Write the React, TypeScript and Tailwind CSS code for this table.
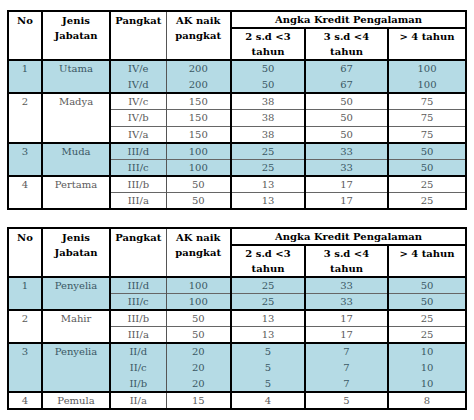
import React from "react";

type Row = { p: string; ak: string; a: string; b: string; c: string };
type Group = { no: string; jenis: string; blue: boolean; inner: boolean; rows: Row[] };

const t1: Group[] = [
  { no: "1", jenis: "Utama", blue: true, inner: false, rows: [
    { p: "IV/e", ak: "200", a: "50", b: "67", c: "100" },
    { p: "IV/d", ak: "200", a: "50", b: "67", c: "100" },
  ]},
  { no: "2", jenis: "Madya", blue: false, inner: true, rows: [
    { p: "IV/c", ak: "150", a: "38", b: "50", c: "75" },
    { p: "IV/b", ak: "150", a: "38", b: "50", c: "75" },
    { p: "IV/a", ak: "150", a: "38", b: "50", c: "75" },
  ]},
  { no: "3", jenis: "Muda", blue: true, inner: true, rows: [
    { p: "III/d", ak: "100", a: "25", b: "33", c: "50" },
    { p: "III/c", ak: "100", a: "25", b: "33", c: "50" },
  ]},
  { no: "4", jenis: "Pertama", blue: false, inner: true, rows: [
    { p: "III/b", ak: "50", a: "13", b: "17", c: "25" },
    { p: "III/a", ak: "50", a: "13", b: "17", c: "25" },
  ]},
];

const t2: Group[] = [
  { no: "1", jenis: "Penyelia", blue: true, inner: true, rows: [
    { p: "III/d", ak: "100", a: "25", b: "33", c: "50" },
    { p: "III/c", ak: "100", a: "25", b: "33", c: "50" },
  ]},
  { no: "2", jenis: "Mahir", blue: false, inner: true, rows: [
    { p: "III/b", ak: "50", a: "13", b: "17", c: "25" },
    { p: "III/a", ak: "50", a: "13", b: "17", c: "25" },
  ]},
  { no: "3", jenis: "Penyelia", blue: true, inner: false, rows: [
    { p: "II/d", ak: "20", a: "5", b: "7", c: "10" },
    { p: "II/c", ak: "20", a: "5", b: "7", c: "10" },
    { p: "II/b", ak: "20", a: "5", b: "7", c: "10" },
  ]},
  { no: "4", jenis: "Pemula", blue: false, inner: true, rows: [
    { p: "II/a", ak: "15", a: "4", b: "5", c: "8" },
  ]},
];

function Table({ groups }: { groups: Group[] }) {
  const th = "border-2 border-black align-top text-center font-bold text-black p-0 leading-[15px]";
  return (
    <table className="table-fixed border-collapse w-[458px] text-[10px] leading-[13px]">
      <colgroup>
        <col className="w-[34px]" />
        <col className="w-[68px]" />
        <col className="w-[56px]" />
        <col className="w-[65px]" />
        <col className="w-[74px]" />
        <col className="w-[83px]" />
        <col className="w-[78px]" />
      </colgroup>
      <thead>
        <tr className="h-[17px]">
          <th rowSpan={2} className={`${th} pt-[1px]`}>No</th>
          <th rowSpan={2} className={`${th} pt-[1px]`}>Jenis<br />Jabatan</th>
          <th rowSpan={2} className={`${th} pt-[1px] border-r-[1px] border-r-[#555]`}>Pangkat</th>
          <th rowSpan={2} className={`${th} pt-[1px] border-l-[1px] border-l-[#555]`}>AK naik<br />pangkat</th>
          <th colSpan={3} className={`${th} align-middle leading-[13px]`}>Angka Kredit Pengalaman</th>
        </tr>
        <tr className="h-[31px]">
          <th className={th}>2 s.d &lt;3<br />tahun</th>
          <th className={th}>3 s.d &lt;4<br />tahun</th>
          <th className={th}>&gt; 4 tahun</th>
        </tr>
      </thead>
      <tbody>
        {groups.map((g, gi) => {
          const bg = g.blue ? "bg-[#b5dbe5] text-[#3b5864]" : "bg-white text-[#5a5a5a]";
          const top = gi === 0 ? "border-t-0" : "border-t-2 border-t-black";
          return g.rows.map((r, ri) => {
            const rt = ri === 0 ? top : g.inner ? "border-t border-t-[#666]" : "border-t-0";
            const last = gi === groups.length - 1 && ri === g.rows.length - 1;
            const bb = last ? "border-b-2 border-b-black" : "border-b-0";
            const td = `${bg} ${rt} ${bb} text-center align-middle p-0`;
            return (
              <tr key={gi + "-" + ri} className="h-[16.5px]">
                {ri === 0 && (
                  <>
                    <td rowSpan={g.rows.length} className={`${bg} ${top} border-b-2 border-b-black border-x-2 border-x-black text-center align-top p-0 pt-[1px]`}>{g.no}</td>
                    <td rowSpan={g.rows.length} className={`${bg} ${top} border-b-2 border-b-black border-x-2 border-x-black text-center align-top p-0 pt-[1px]`}>{g.jenis}</td>
                  </>
                )}
                <td className={`${td} border-l-2 border-l-black border-r border-r-[#555]`}>{r.p}</td>
                <td className={`${td} border-l border-l-[#555] border-r-2 border-r-black`}>{r.ak}</td>
                <td className={`${td} border-x-2 border-x-black`}>{r.a}</td>
                <td className={`${td} border-x-2 border-x-black`}>{r.b}</td>
                <td className={`${td} border-x-2 border-x-black`}>{r.c}</td>
              </tr>
            );
          });
        })}
      </tbody>
    </table>
  );
}

export default function App() {
  return (
    <div className="w-[474px] h-[420px] bg-white pt-[10px] pl-[7px] flex flex-col gap-[17px]" style={{ fontFamily: '"DejaVu Serif", serif' }}>
      <Table groups={t1} />
      <Table groups={t2} />
    </div>
  );
}
